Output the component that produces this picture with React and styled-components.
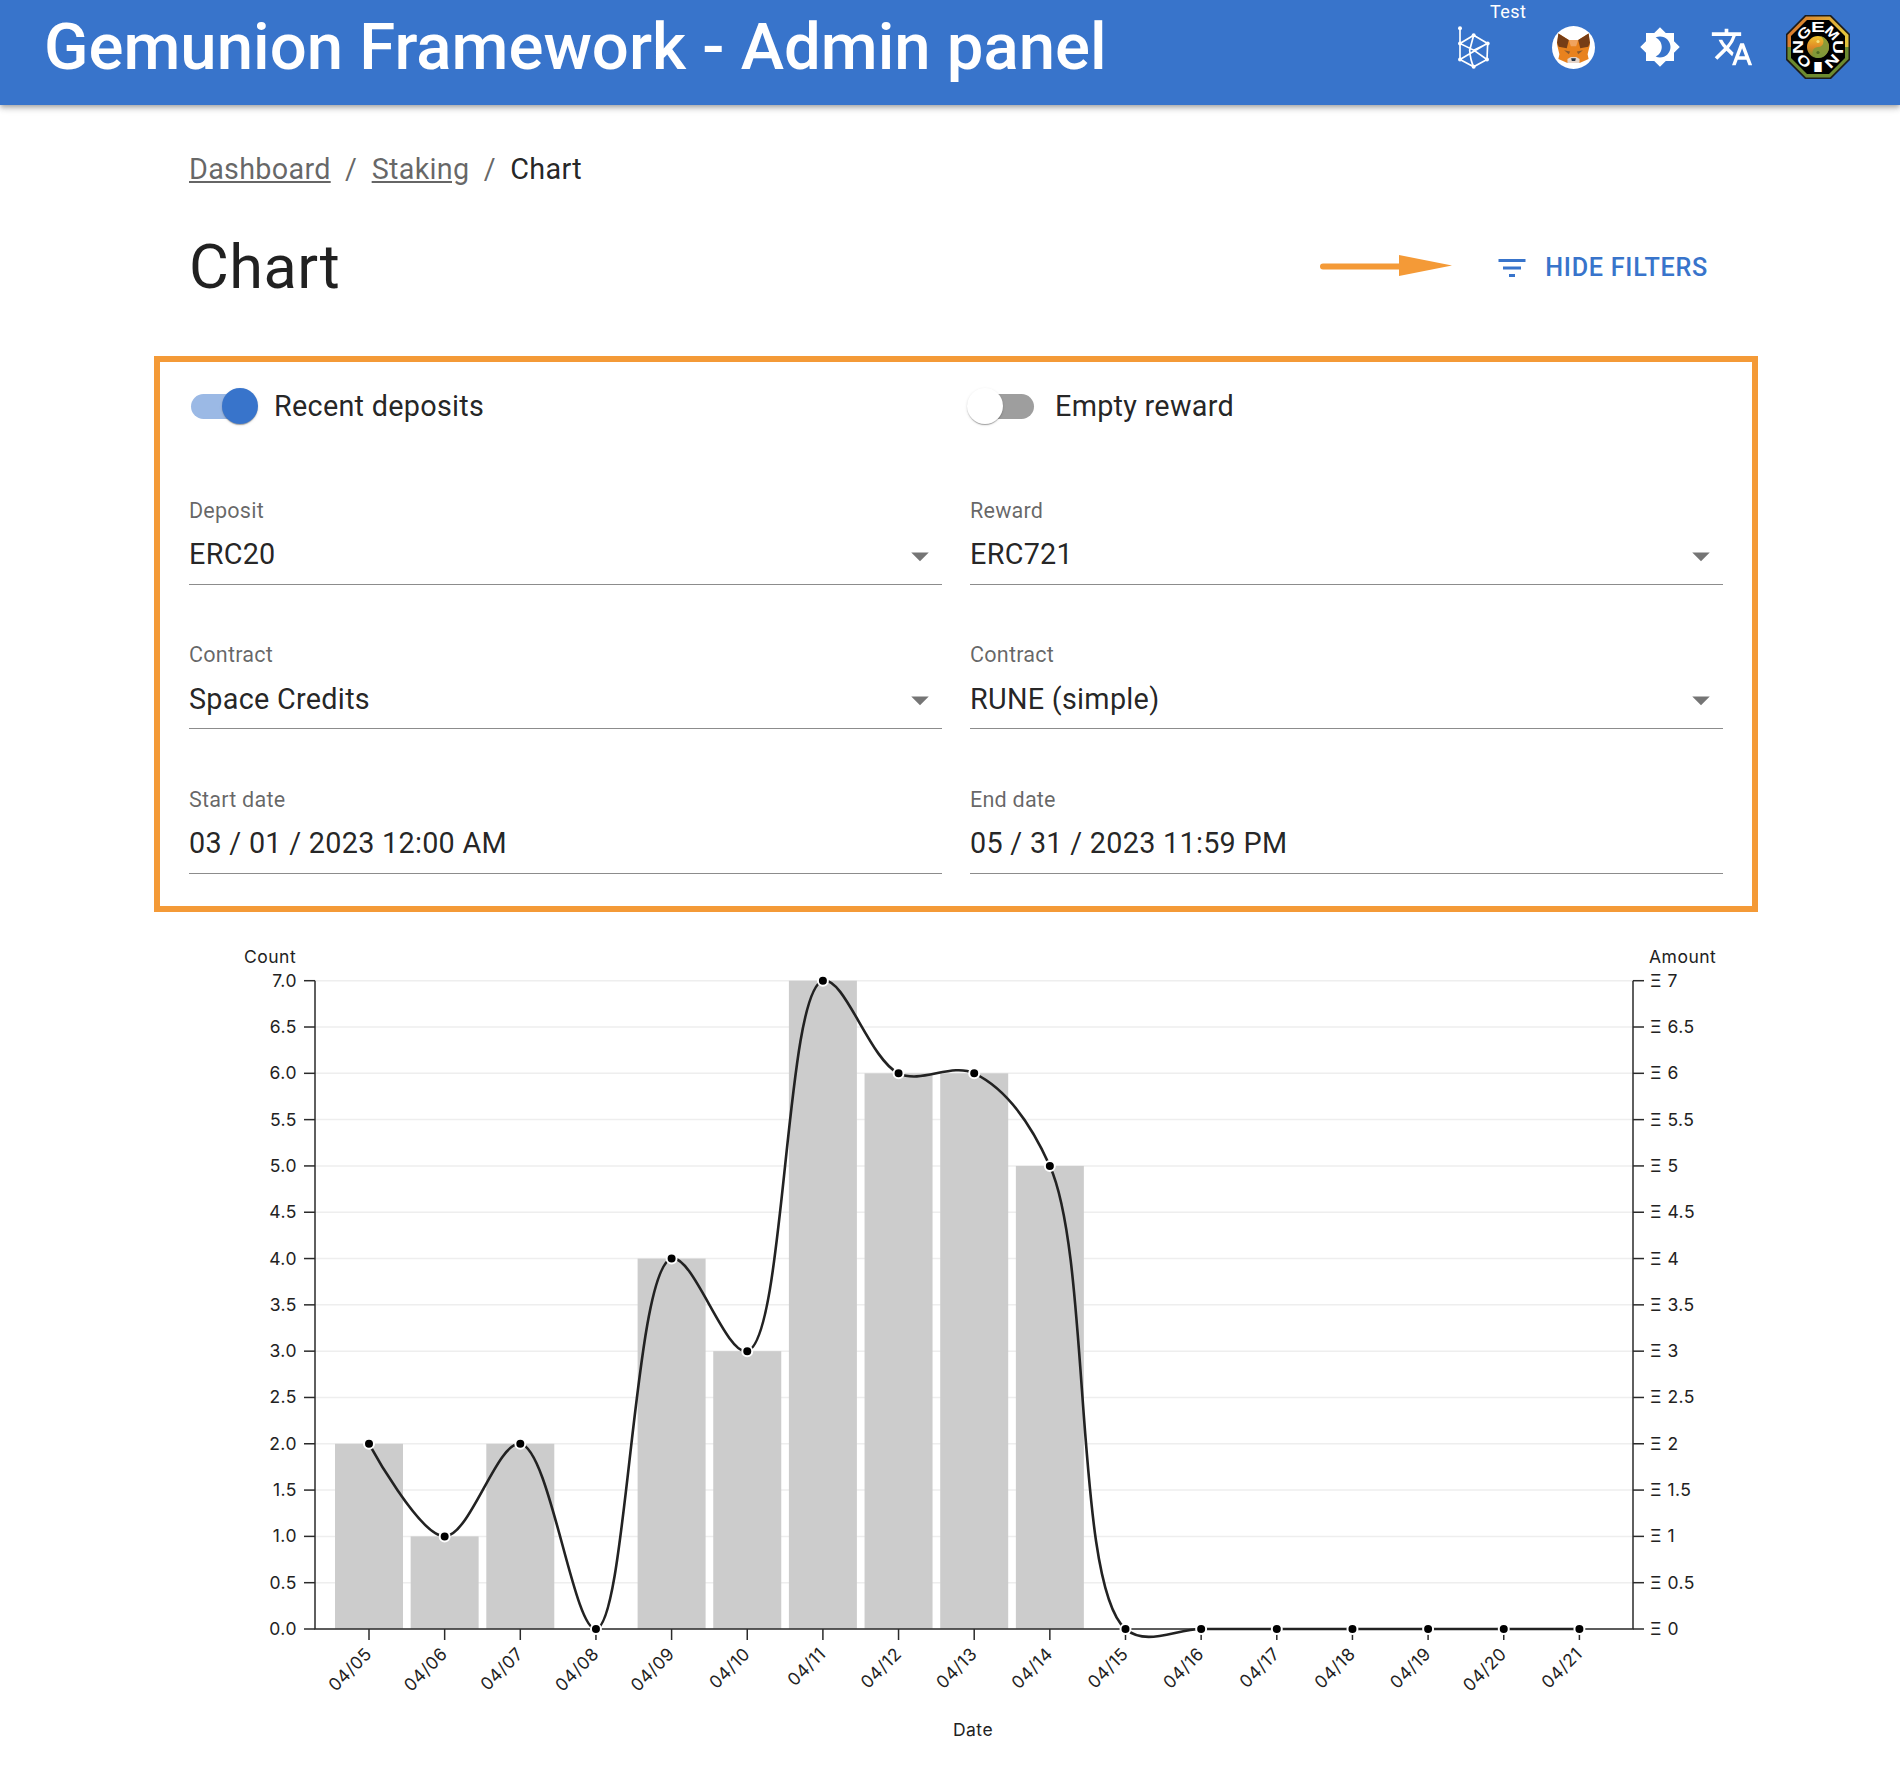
import React from 'react';
import styled, { createGlobalStyle } from 'styled-components';
import { MdBrightness4, MdTranslate, MdArrowDropDown, MdFilterList } from 'react-icons/md';

const GlobalStyle = createGlobalStyle`
  html, body { margin: 0; padding: 0; background: #fff; }
  body { font-family: Roboto, "Liberation Sans", sans-serif; color: rgba(0, 0, 0, 0.87); }
`;

const Page = styled.div`
  width: 1900px;
  height: 1782px;
  overflow: hidden;
`;

const Header = styled.header`
  height: 105px;
  box-sizing: border-box;
  background: #3874cb;
  color: #fff;
  display: flex;
  align-items: center;
  padding: 0 50px 11px 44px;
  box-shadow: 0 2px 4px -1px rgba(0,0,0,.2), 0 4px 5px rgba(0,0,0,.14), 0 1px 10px rgba(0,0,0,.12);
`;

const Title = styled.h1`
  margin: 0 auto 0 0;
  font-size: 65.3px;
  font-weight: 500;
  line-height: 1;
`;

const IconSlot = styled.div`
  position: relative;
  width: ${p => p.$w}px;
  margin-left: ${p => p.$gap}px;
  display: flex;
  align-items: center;
  justify-content: center;
  flex: none;
`;

const NetworkBadge = styled.span`
  position: absolute;
  left: 34px;
  top: -22px;
  font-size: 18px;
  line-height: 20px;
  letter-spacing: 0.4px;
`;

const Content = styled.main`
  padding: 0 142px 0 154px;
`;

const Crumbs = styled.nav`
  height: 50px;
  margin: 39px 0 0 35px;
  display: flex;
  align-items: center;
  font-size: 28.8px;
  letter-spacing: 0.27px;
`;

const CrumbLink = styled.a`
  color: rgba(0, 0, 0, 0.6);
  text-decoration: underline;
`;

const CrumbSep = styled.span`
  color: rgba(0, 0, 0, 0.6);
  margin: 0 14.4px;
`;

const TitleRow = styled.div`
  height: 147px;
  margin: 0 50px 15px 35px;
  display: flex;
  align-items: center;
`;

const PageTitle = styled.h2`
  margin: 0 auto 0 0;
  font-size: 61.2px;
  font-weight: 400;
  line-height: 1;
  letter-spacing: 0.45px;
`;

const FilterButton = styled.button`
  display: flex;
  align-items: center;
  gap: 15px;
  margin-left: 40px;
  padding: 0;
  border: 0;
  background: none;
  color: #3874cb;
  font: 500 25.2px Roboto, sans-serif;
  letter-spacing: 0.72px;
`;

const FilterBox = styled.section`
  height: 556px;
  box-sizing: border-box;
  border: 6px solid #f49a37;
  padding: 14px 29px 0;
`;

const FormGrid = styled.div`
  display: grid;
  grid-template-columns: 753px 753px;
  column-gap: 28px;
`;

const ToggleRow = styled.label`
  height: 60px;
  margin-bottom: 4px;
  display: flex;
  align-items: center;
  gap: 21px;
  font-size: 28.8px;
  letter-spacing: 0.27px;
`;

const Switch = styled.span`
  position: relative;
  width: 64px;
  height: 36px;
  flex: none;
  &::before {
    content: '';
    position: absolute;
    left: 2px;
    right: 0;
    top: 5.5px;
    height: 25px;
    border-radius: 13px;
    background: ${p => (p.$on ? '#9bb9e5' : '#9e9e9e')};
  }
`;

const Thumb = styled.span`
  position: absolute;
  top: 0;
  left: ${p => (p.$on ? '33px' : '-3px')};
  width: 36px;
  height: 36px;
  border-radius: 50%;
  background: ${p => (p.$on ? '#3874cb' : '#fff')};
  box-shadow: 0 2px 1px -1px rgba(0,0,0,.2), 0 1px 1px rgba(0,0,0,.14), 0 1px 3px rgba(0,0,0,.12);
`;

const Field = styled.div`
  height: 144.5px;
  display: flex;
  flex-direction: column;
  justify-content: flex-end;
`;

const FieldLabel = styled.div`
  font-size: 21.6px;
  line-height: 30px;
  color: rgba(0, 0, 0, 0.6);
  letter-spacing: 0.2px;
`;

const FieldValue = styled.div`
  position: relative;
  height: 56px;
  margin-top: 3px;
  box-sizing: border-box;
  border-bottom: 1.5px solid #8c8c8c;
  padding-bottom: 4px;
  display: flex;
  align-items: center;
  font-size: 28.8px;
  letter-spacing: 0.27px;
`;

const Caret = styled(MdArrowDropDown)`
  position: absolute;
  right: 1px;
  top: 6px;
  color: rgba(0, 0, 0, 0.54);
`;

const ChartSvg = styled.svg`
  display: block;
  margin: 28px 0 0 35px;
  font-family: Inter, sans-serif;
  font-size: 17.5px;
  letter-spacing: 0.5px;
  fill: #222;
`;

const days = ['04/05', '04/06', '04/07', '04/08', '04/09', '04/10', '04/11', '04/12', '04/13', '04/14', '04/15', '04/16', '04/17', '04/18', '04/19', '04/20', '04/21'];
const counts = [2, 1, 2, 0, 4, 3, 7, 6, 6, 5, 0, 0, 0, 0, 0, 0, 0];

const TOP = 980.7;
const BOTTOM = 1629;
const LEFT = 315;
const RIGHT = 1633;
const STEP = 75.65;
const FIRST = 369;
const yOf = v => BOTTOM - (v / 7) * (BOTTOM - TOP);
const ticks = Array.from({ length: 15 }, (_, i) => i * 0.5);

// catmull-rom, alpha 0.5, the same maths as d3-shape
function splinePath(points) {
  const dist = (a, b) => Math.hypot(a[0] - b[0], a[1] - b[1]);
  let d = `M${points[0][0]},${points[0][1]}`;
  for (let i = 0; i < points.length - 1; i++) {
    const p0 = points[i - 1] || points[i];
    const p1 = points[i];
    const p2 = points[i + 1];
    const p3 = points[i + 2] || p2;
    const l01 = Math.sqrt(dist(p0, p1));
    const l12 = Math.sqrt(dist(p1, p2));
    const l23 = Math.sqrt(dist(p2, p3));
    let c1 = p1;
    let c2 = p2;
    if (l01 > 1e-6) {
      const a = 2 * l01 * l01 + 3 * l01 * l12 + l12 * l12;
      const n = 3 * l01 * (l01 + l12);
      c1 = [0, 1].map(k => (p1[k] * a - p0[k] * l12 * l12 + p2[k] * l01 * l01) / n);
    }
    if (l23 > 1e-6) {
      const b = 2 * l23 * l23 + 3 * l23 * l12 + l12 * l12;
      const m = 3 * l23 * (l23 + l12);
      c2 = [0, 1].map(k => (p2[k] * b + p1[k] * l23 * l23 - p3[k] * l12 * l12) / m);
    }
    d += `C${c1[0]},${c1[1]} ${c2[0]},${c2[1]} ${p2[0]},${p2[1]}`;
  }
  return d;
}

const StakingChart = () => {
  const points = counts.map((v, i) => [FIRST + i * STEP, yOf(v)]);
  return (
    <ChartSvg width="1540" height="820" viewBox="189 940 1540 820">
      {ticks.map(t => (
        <line key={t} x1={LEFT} x2={RIGHT} y1={yOf(t)} y2={yOf(t)} stroke="#eee" strokeWidth="1.5" />
      ))}
      {counts.map((v, i) => (
        <rect key={days[i]} x={FIRST + i * STEP - 34} y={yOf(v)} width="68" height={BOTTOM - yOf(v)} fill="#ccc" />
      ))}
      <path d={`M${LEFT},${TOP}V${BOTTOM}H${RIGHT}V${TOP}`} fill="none" stroke="#2b2b2b" strokeWidth="1.5" />
      {ticks.map(t => (
        <g key={t}>
          <line x1={LEFT - 11} x2={LEFT} y1={yOf(t)} y2={yOf(t)} stroke="#2b2b2b" strokeWidth="1.5" />
          <line x1={RIGHT} x2={RIGHT + 11} y1={yOf(t)} y2={yOf(t)} stroke="#2b2b2b" strokeWidth="1.5" />
          <text x={LEFT - 18} y={yOf(t) + 6} textAnchor="end">{t.toFixed(1)}</text>
          <text x={RIGHT + 17} y={yOf(t) + 6}>Ξ {t}</text>
        </g>
      ))}
      {days.map((day, i) => (
        <g key={day}>
          <line x1={FIRST + i * STEP} x2={FIRST + i * STEP} y1={BOTTOM} y2={BOTTOM + 11} stroke="#2b2b2b" strokeWidth="1.5" />
          <text transform={`translate(${FIRST + i * STEP + 4},${BOTTOM + 26}) rotate(-45)`} textAnchor="end">{day}</text>
        </g>
      ))}
      <path d={splinePath(points)} fill="none" stroke="#222" strokeWidth="2.6" />
      {points.map((p, i) => (
        <circle key={days[i]} cx={p[0]} cy={p[1]} r="5" fill="#000" stroke="#fff" strokeWidth="2" />
      ))}
      <text x="244" y="963">Count</text>
      <text x="1649" y="963">Amount</text>
      <text x="973" y="1736" textAnchor="middle">Date</text>
    </ChartSvg>
  );
};

const NetworkIcon = () => (
  <svg width="35" height="47" viewBox="45 72 105 140" fill="none" stroke="#fff" strokeWidth="5">
    <path d="M57 84V178L98 200L138 178L140 130L98 105L57 130L98 150L140 130M98 105L86 150Q88 180 98 200M57 178L138 130M98 150L138 178" />
    {[[57, 84], [57, 130], [57, 178], [98, 105], [140, 130], [138, 178], [98, 200]].map(([x, y]) => (
      <circle key={`${x}-${y}`} cx={x} cy={y} r="6" fill="#fff" stroke="none" />
    ))}
  </svg>
);

const FoxIcon = () => (
  <svg width="43" height="43" viewBox="0 0 128 128">
    <circle cx="64" cy="64" r="64" fill="#fff" />
    <path d="M19 22L50 42H78L109 22L113 55L106 84L109 98L82 110H46L19 98L22 84L15 55Z" fill="#e8821e" />
    <path d="M19 22L50 42L44 66L20 62L15 50Z" fill="#763d16" />
    <path d="M109 22L78 42L84 66L108 62L113 50Z" fill="#763d16" />
    <path d="M50 42H78L72 60H56Z" fill="#f0a35e" />
    <path d="M36 72L54 76L50 84Z M92 72L74 76L78 84Z" fill="#8a5a2e" />
    <path d="M46 98L56 92H72L82 98V110H46Z" fill="#e4d4c8" />
    <path d="M57 96H71L69 104H59Z" fill="#233447" />
  </svg>
);

const logoLetters = ['G', 'E', 'M', 'U', 'N', 'I', 'O', 'N'];

const LogoMark = () => (
  <svg width="64" height="64" viewBox="0 0 64 64">
    <defs>
      <linearGradient id="ringGrad" x1="0" y1="0" x2="1" y2="0.2">
        <stop offset="0" stopColor="#d9702a" />
        <stop offset="1" stopColor="#e3c33c" />
      </linearGradient>
      <linearGradient id="coreGrad" x1="0" y1="0" x2="0" y2="1">
        <stop offset="0" stopColor="#f0c52e" />
        <stop offset="0.5" stopColor="#e08a26" />
        <stop offset="1" stopColor="#6f8f34" />
      </linearGradient>
    </defs>
    <polygon points="19,0 45,0 64,19 64,45 45,64 19,64 0,45 0,19" fill="#1c1c1c" />
    <polygon points="20,1.5 44,1.5 62.5,20 62.5,32 1.5,32 1.5,20" fill="url(#ringGrad)" />
    <polygon points="1.5,32 62.5,32 62.5,44 44,62.5 20,62.5 1.5,44" fill="#6d8b2f" />
    <polygon points="21,5 43,5 59,21 59,43 43,59 21,59 5,43 5,21" fill="#000" />
    {logoLetters.map((ch, i) => (
      <text
        key={i}
        transform={`rotate(${-45 + i * 45} 32 32)`}
        x="32"
        y="17"
        textAnchor="middle"
        fill="#fff"
        fontFamily="'Liberation Sans', sans-serif"
        fontWeight="700"
        fontSize="14"
        textLength="14"
        lengthAdjust="spacingAndGlyphs"
      >
        {ch}
      </text>
    ))}
    <circle cx="32" cy="32" r="11" fill="url(#coreGrad)" />
    <path d="M32 21A5.5 5.5 0 0 1 32 32A5.5 5.5 0 0 0 32 43A11 11 0 0 0 32 21Z" fill="#7d9a3a" opacity="0.85" />
    <circle cx="32" cy="26.5" r="1.6" fill="#f6e27a" />
    <circle cx="32" cy="37.5" r="1.6" fill="#4f6c22" />
  </svg>
);

const ArrowMark = styled.svg`
  margin-bottom: 3px;
`;

const ToggleField = ({ label, on }) => (
  <ToggleRow>
    <Switch $on={on}>
      <Thumb $on={on} />
    </Switch>
    {label}
  </ToggleRow>
);

const SelectField = ({ label, value, select }) => (
  <Field>
    <FieldLabel>{label}</FieldLabel>
    <FieldValue>
      {value}
      {select && <Caret size={42} />}
    </FieldValue>
  </Field>
);

export default function App() {
  return (
    <Page>
      <GlobalStyle />
      <Header>
        <Title>Gemunion Framework - Admin panel</Title>
        <IconSlot $w={35} $gap={0}>
          <NetworkBadge>Test</NetworkBadge>
          <NetworkIcon />
        </IconSlot>
        <IconSlot $w={43} $gap={61}><FoxIcon /></IconSlot>
        <IconSlot $w={42} $gap={44}><MdBrightness4 size={50} /></IconSlot>
        <IconSlot $w={44} $gap={29}><MdTranslate size={48} /></IconSlot>
        <IconSlot $w={64} $gap={32}><LogoMark /></IconSlot>
      </Header>
      <Content>
        <Crumbs>
          <CrumbLink>Dashboard</CrumbLink>
          <CrumbSep>/</CrumbSep>
          <CrumbLink>Staking</CrumbLink>
          <CrumbSep>/</CrumbSep>
          <span>Chart</span>
        </Crumbs>
        <TitleRow>
          <PageTitle>Chart</PageTitle>
          <ArrowMark width="134" height="24" viewBox="0 0 134 24">
            <path d="M3 12.5H80" stroke="#f49a37" strokeWidth="6" strokeLinecap="round" />
            <polygon points="79,1 132,11.5 79,22" fill="#f49a37" />
          </ArrowMark>
          <FilterButton>
            <MdFilterList size={36} />
            HIDE FILTERS
          </FilterButton>
        </TitleRow>
        <FilterBox>
          <FormGrid>
            <ToggleField label="Recent deposits" on />
            <ToggleField label="Empty reward" />
            <SelectField label="Deposit" value="ERC20" select />
            <SelectField label="Reward" value="ERC721" select />
            <SelectField label="Contract" value="Space Credits" select />
            <SelectField label="Contract" value="RUNE (simple)" select />
            <SelectField label="Start date" value="03 / 01 / 2023 12:00 AM" />
            <SelectField label="End date" value="05 / 31 / 2023 11:59 PM" />
          </FormGrid>
        </FilterBox>
        <StakingChart />
      </Content>
    </Page>
  );
}
